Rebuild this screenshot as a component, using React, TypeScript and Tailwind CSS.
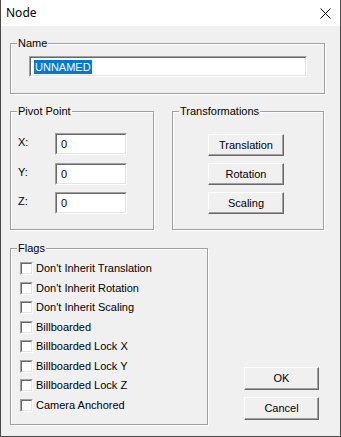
import React from "react";

const font = { fontFamily: '"Liberation Sans", Arial, sans-serif' };

function Sunken({ className, children }: { className: string; children?: React.ReactNode }) {
  return (
    <div className={`border-t border-l border-t-[#a0a0a0] border-l-[#a0a0a0] border-b border-r border-b-white border-r-white ${className}`}>
      <div className="w-full h-full border-t border-l border-t-[#696969] border-l-[#696969] border-b border-r border-b-[#e3e3e3] border-r-[#e3e3e3] bg-white flex items-center">
        {children}
      </div>
    </div>
  );
}

function Btn({ label, className }: { label: string; className: string }) {
  return (
    <div
      className={`border-t border-l border-t-white border-l-white border-b border-r border-b-[#696969] border-r-[#696969] bg-[#f0f0f0] shadow-[inset_-1px_-1px_0_#a0a0a0] flex items-center justify-center text-[11px] leading-[13px] text-black ${className}`}
    >
      {label}
    </div>
  );
}

function Group({ title, className, children }: { title: string; className: string; children?: React.ReactNode }) {
  return (
    <fieldset className={`border border-[#a0a0a0] shadow-[inset_1px_1px_0_#fff,1px_1px_0_#fff] ${className}`}>
      <legend className="ml-[6px] px-[1px] text-[11px] leading-[13px] text-black bg-[#f0f0f0]">{title}</legend>
      {children}
    </fieldset>
  );
}

function Check({ label }: { label: string }) {
  return (
    <div className="h-[19.5px] flex items-center pl-[9px]">
      <Sunken className="w-[13px] h-[13px] shrink-0" />
      <span className="ml-[3px] text-[11px] leading-[13px] text-black">{label}</span>
    </div>
  );
}

export default function App() {
  const flags = [
    "Don't Inherit Translation",
    "Don't Inherit Rotation",
    "Don't Inherit Scaling",
    "Billboarded",
    "Billboarded Lock X",
    "Billboarded Lock Y",
    "Billboarded Lock Z",
    "Camera Anchored",
  ];
  return (
    <div style={font} className="w-[341px] h-[437px] flex flex-col border-x border-b border-[#4a4a4a] bg-[#f0f0f0] overflow-hidden">
      <div className="h-[26px] bg-white flex items-center justify-between pl-[5px] pr-[9px] shrink-0">
        <span className="text-[12px] leading-[16px] text-black" style={{ fontFamily: '"Noto Sans", sans-serif' }}>
          Node
        </span>
        <svg width="11" height="11" viewBox="0 0 11 11" className="mt-[1px]">
          <path d="M0.5 0.5 L10.5 10.5 M10.5 0.5 L0.5 10.5" stroke="#000" strokeWidth="1" />
        </svg>
      </div>
      <div className="flex-1 pl-[9px] flex flex-col">
        <Group title="Name" className="mt-[11px] w-[315px] h-[57px]">
          <Sunken className="ml-[18px] mt-[6px] w-[278px] h-[21px]">
            <span className="ml-[3px] bg-[#0078d7] text-white text-[11px] leading-[14px] px-[1px]">UNNAMED</span>
          </Sunken>
        </Group>
        <div className="flex mt-[11px]">
          <Group title="Pivot Point" className="w-[144px] h-[125px]">
            {["X:", "Y:", "Z:"].map((l, i) => (
              <div key={l} className={`flex items-start ${i === 0 ? "mt-[15px]" : i === 1 ? "mt-[8px]" : "mt-[7px]"}`}>
                <span className="w-[44px] pl-[7px] mt-[3px] text-[11px] leading-[13px] text-black">{l}</span>
                <Sunken className="w-[72px] h-[22px]">
                  <span className="ml-[4px] text-[11px] leading-[13px] text-black">0</span>
                </Sunken>
              </div>
            ))}
          </Group>
          <Group title="Transformations" className="ml-[18px] w-[152px] h-[125px]">
            <Btn label="Translation" className="ml-[35px] mt-[16px] w-[76px] h-[22px]" />
            <Btn label="Rotation" className="ml-[35px] mt-[7px] w-[76px] h-[22px]" />
            <Btn label="Scaling" className="ml-[35px] mt-[7px] w-[76px] h-[22px]" />
          </Group>
        </div>
        <div className="flex mt-[12px]">
          <Group title="Flags" className="w-[198px] h-[183px]">
            <div className="mt-[4px] flex flex-col">
              {flags.map((f) => (
                <Check key={f} label={f} />
              ))}
            </div>
          </Group>
          <div className="ml-[36px] mt-[125px] flex flex-col">
            <Btn label="OK" className="w-[75px] h-[23px]" />
            <Btn label="Cancel" className="mt-[7px] w-[75px] h-[23px]" />
          </div>
        </div>
      </div>
    </div>
  );
}
